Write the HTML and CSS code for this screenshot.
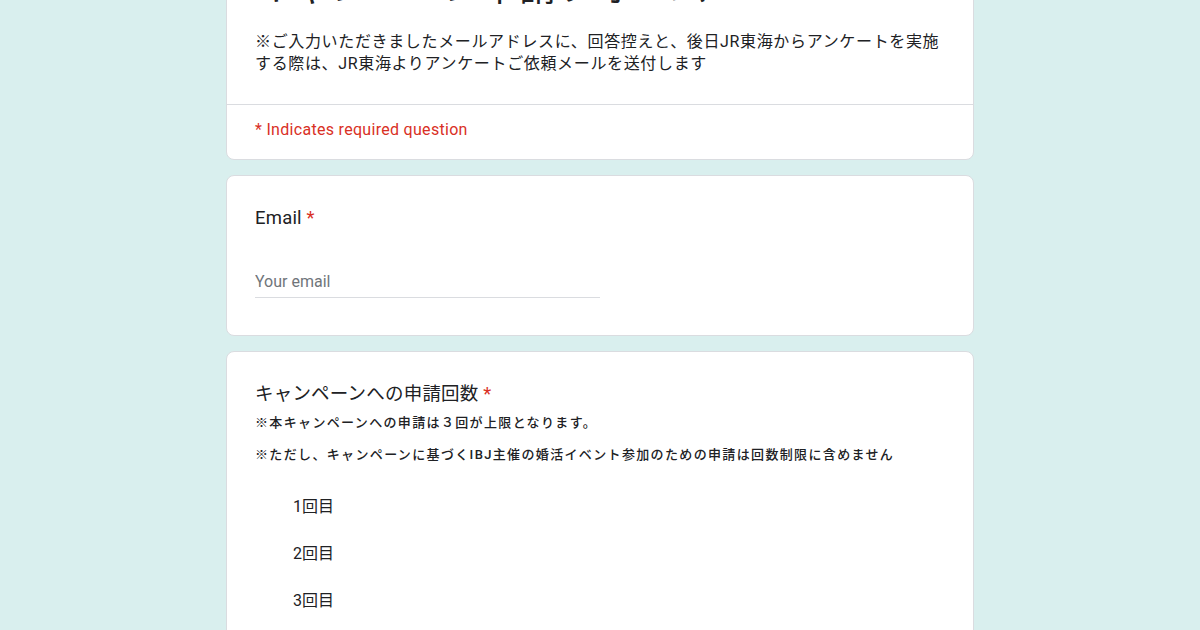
FILE: index.html
```html
<!DOCTYPE html>
<html lang="ja">
<head>
    <meta charset="UTF-8">
    <meta name="viewport" content="width=device-width, initial-scale=1.0">
    <title>キャンペーン申請フォーム</title>
    <link rel="stylesheet" href="styles.css">
</head>
<body>
<div class="form-container">
    <!-- Header card -->
    <div class="card header-card">
        <div class="header-body">
            <h1 class="form-title">キャンペーン申請フォーム</h1>
            <p class="form-desc">※ご入力いただきましたメールアドレスに、回答控えと、後日JR東海からアンケートを実施する際は、JR東海よりアンケートご依頼メールを送付します</p>
        </div>
        <div class="required-note">* Indicates required question</div>
    </div>

    <!-- Email -->
    <div class="card question-card">
        <div class="question-title">Email <span class="req">*</span></div>
        <div class="text-field">
            <input type="email" placeholder="Your email">
        </div>
    </div>

    <!-- 申請回数 -->
    <div class="card question-card">
        <div class="question-title">キャンペーンへの申請回数 <span class="req">*</span></div>
        <div class="question-help">
            <p>※本キャンペーンへの申請は３回が上限となります。</p>
            <p>※ただし、キャンペーンに基づくIBJ主催の婚活イベント参加のための申請は回数制限に含めません</p>
        </div>
        <div class="options">
            <label class="option"><input type="radio" name="count" value="1">1回目</label>
            <label class="option"><input type="radio" name="count" value="2">2回目</label>
            <label class="option"><input type="radio" name="count" value="3">3回目</label>
        </div>
    </div>
</div>
</body>
</html>
```

FILE: styles.css
```css
body {
    margin: 0;
    background-color: #d9efee;
    font-family: Roboto, "Noto Sans CJK JP", sans-serif;
    color: #202124;
    overflow: hidden;
}

.form-container {
    width: 748px;
    margin: -50px auto 0;
    display: flex;
    flex-direction: column;
    gap: 15px;
}

.card {
    background-color: #fff;
    border: 1px solid #dadce0;
    border-radius: 8px;
}

.header-body {
    padding: 15px 28px 29px;
    border-bottom: 1px solid #dadce0;
}

.form-title {
    margin: 0;
    font-size: 37px;
    font-weight: 400;
    line-height: 46px;
    letter-spacing: 1px;
}

.form-desc {
    margin: 19px 0 0;
    font-size: 16px;
    line-height: 22px;
    letter-spacing: 0.65px;
}

.required-note {
    padding: 15px 28px 19px;
    font-size: 16px;
    line-height: 20px;
    letter-spacing: 0.3px;
    color: #d93025;
}

.question-card {
    padding: 29px 28px 37px;
}

.question-title {
    font-size: 18.5px;
    line-height: 26px;
    letter-spacing: 0.2px;
}

.req {
    color: #d93025;
}

.text-field {
    margin-top: 37px;
    width: 345px;
}

.text-field input {
    width: 100%;
    box-sizing: border-box;
    border: none;
    border-bottom: 1px solid #dadce0;
    padding: 4px 0 6px;
    font-family: Roboto, sans-serif;
    font-size: 16px;
    outline: none;
}

.text-field input::placeholder {
    color: #70757a;
}

.question-help {
    margin-top: 5px;
}

.question-help p {
    margin: 0 0 10px;
    font-size: 13px;
    line-height: 22px;
    letter-spacing: 1.35px;
    font-weight: 500;
}

.options {
    display: flex;
    flex-direction: column;
    margin-top: 15px;
}

.option {
    display: flex;
    align-items: center;
    height: 47px;
    font-size: 16px;
}

.option input {
    visibility: hidden;
    margin: 0 18px 0 0;
    width: 20px;
    height: 20px;
}
```
